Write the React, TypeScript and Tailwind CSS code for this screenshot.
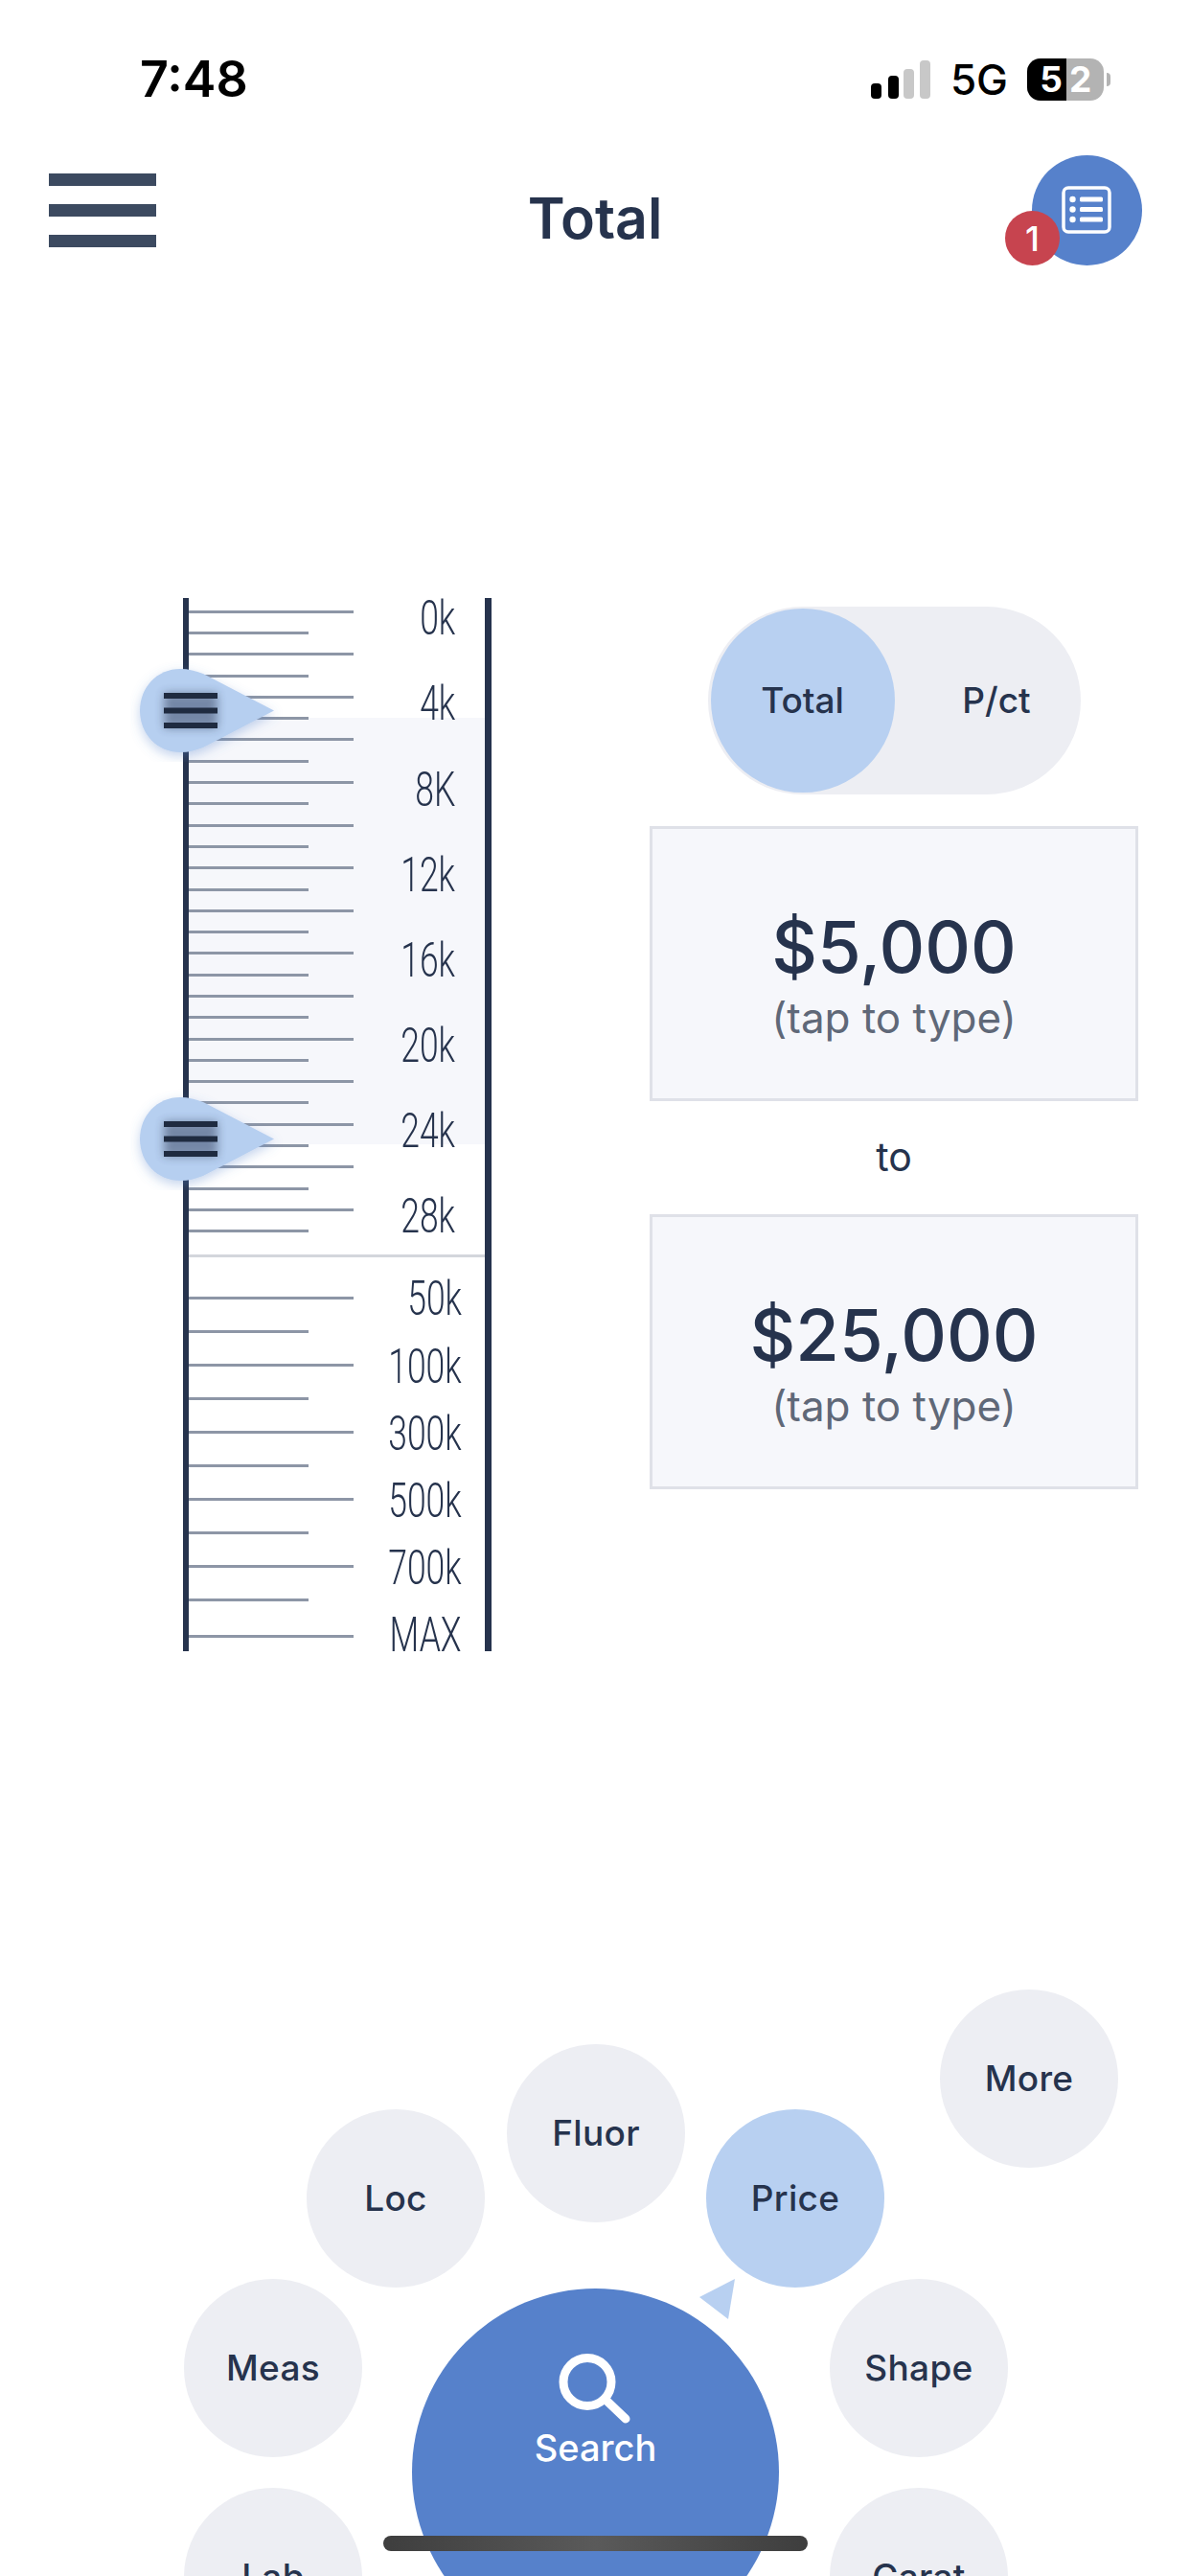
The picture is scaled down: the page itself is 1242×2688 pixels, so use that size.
import React from "react";

const SANS = "font-['Inter','Liberation_Sans',sans-serif]";

const upper = ["0k", "4k", "8K", "12k", "16k", "20k", "24k", "28k"];
const lower = ["50k", "", "100k", "", "300k", "", "500k", "", "700k", ""];

function Tick({ long }: { long: boolean }) {
  return <div className={`h-[3px] bg-[#8d96a6] ${long ? "w-[172px]" : "w-[125px]"}`} />;
}

function ScaleLabel({ text, className }: { text: string; className: string }) {
  return (
    <div className={`ml-auto flex h-0 items-center ${className}`}>
      <span className="origin-right scale-x-[0.71] font-['Roboto',sans-serif] text-[50px] font-light leading-none whitespace-nowrap text-[#26334d]">
        {text}
      </span>
    </div>
  );
}

function Handle({ top }: { top: string }) {
  return (
    <svg
      className={`absolute left-[-61px] h-[107px] w-[170px] ${top}`}
      viewBox="0 0 170 107"
      fill="none"
    >
      <defs>
        <filter id="hs" x="-30%" y="-30%" width="160%" height="170%">
          <feDropShadow dx="0" dy="4" stdDeviation="6" floodColor="#5681cb" floodOpacity="0.35" />
        </filter>
        <filter id="bs" x="-30%" y="-60%" width="160%" height="220%">
          <feGaussianBlur stdDeviation="5" />
        </filter>
      </defs>
      <path
        d="M52 10 C28 10 10 29 10 53.5 C10 78 28 97 52 97 C61 97 68 95 76 92 L150 53.5 L76 15 C68 12 61 10 52 10 Z"
        fill="#b6cff0"
        filter="url(#hs)"
      />
      <g fill="#26334d" opacity="0.45" filter="url(#bs)">
        <rect x="35" y="35" width="56" height="37" />
      </g>
      <g fill="#1f2b40">
        <rect x="35" y="35" width="56" height="6" />
        <rect x="35" y="50.5" width="56" height="6" />
        <rect x="35" y="66" width="56" height="6" />
      </g>
    </svg>
  );
}

function Ruler() {
  return (
    <div className="relative flex h-[1099px] w-[322px] flex-col border-x-[7px] border-l-[6px] border-[#26334d] pt-[3px]">
      <div className="absolute top-[125px] right-0 left-0 h-[445px] bg-[#f6f7fb]" />
      <div className="relative flex shrink-0 flex-col">
        {Array.from({ length: 30 }).map((_, i) => (
          <div key={i} className="flex h-[22.3px] shrink-0 items-center">
            <Tick long={i % 2 === 0} />
            {i % 4 === 0 && <ScaleLabel text={upper[i / 4]} className="mr-[31px] translate-y-[7px]" />}
          </div>
        ))}
      </div>
      <div className="relative mt-[13px] h-[3px] shrink-0 bg-[#d3d6dc]" />
      <div className="mt-[25px] flex shrink-0 flex-col">
        {lower.map((l, i) => (
          <div key={i} className="flex h-[35.05px] shrink-0 items-center">
            <Tick long={i % 2 === 0} />
            {l && <ScaleLabel text={l} className="mr-[24px] translate-y-[1px]" />}
          </div>
        ))}
        <div className="mt-[3px] flex h-[35px] shrink-0 items-center">
          <Tick long />
          <ScaleLabel text="MAX" className="mr-[24px] -translate-y-[2px]" />
        </div>
      </div>
      <Handle top="top-[64px]" />
      <Handle top="top-[511px]" />
    </div>
  );
}

function PriceBox({ value }: { value: string }) {
  return (
    <div className="flex h-[287px] w-[510px] flex-col items-center justify-center border-[3px] border-[#dfe1e8] bg-[#f6f7fb] pt-[18px]">
      <div className="text-[74px] leading-[90px] font-medium text-[#26334d]">{value}</div>
      <div className="mt-[4px] text-[44px] leading-[50px] text-[#5f6878]">(tap to type)</div>
    </div>
  );
}

function Bubble({ label, className, active }: { label: string; className: string; active?: boolean }) {
  return (
    <div
      className={`absolute flex h-[186px] w-[186px] items-center justify-center rounded-full text-[37px] font-medium tracking-[0.3px] text-[#26334d] ${
        active ? "bg-[#b8d0f1]" : "bg-[#edeef3]"
      } ${className}`}
    >
      {label}
    </div>
  );
}

export default function App() {
  return (
    <div className={`relative h-[2688px] w-[1242px] overflow-hidden bg-white ${SANS}`}>
      {/* status bar */}
      <div className="flex h-[162px] items-center justify-between pt-[3px] pr-[83px] pl-[146px]">
        <div className="text-[52px] leading-none font-semibold text-black">7:48</div>
        <div className="flex items-center">
          <svg width="62" height="40" viewBox="0 0 62 40" fill="none">
            <rect x="0" y="24" width="11" height="16" rx="4" fill="#000" />
            <rect x="18" y="16" width="11" height="24" rx="4" fill="#000" />
            <rect x="34" y="9" width="11" height="31" rx="4" fill="#c8c8c8" />
            <rect x="51" y="0" width="11" height="40" rx="4" fill="#c8c8c8" />
          </svg>
          <div className="ml-[21px] text-[44px] leading-none font-medium text-black">5G</div>
          <div className="ml-[20px] flex items-center">
            <div className="flex h-[44px] w-[80px] overflow-hidden rounded-[14px] bg-[#b3b3b3] text-[37px] leading-[44px] font-bold text-white">
              <div className="w-[41px] bg-black pr-[4px] text-right">5</div>
              <div className="pl-[3px]">2</div>
            </div>
            <div className="ml-[3px] h-[14px] w-[4px] rounded-r-full bg-[#b3b3b3]" />
          </div>
        </div>
      </div>

      {/* header */}
      <div className="relative flex h-[115px] items-center justify-between pr-[50px] pl-[51px]">
        <div className="flex flex-col gap-[19px]">
          <div className="h-[13px] w-[112px] bg-[#3c4a60]" />
          <div className="h-[13px] w-[112px] bg-[#3c4a60]" />
          <div className="h-[13px] w-[112px] bg-[#3c4a60]" />
        </div>
        <div className="mt-[18px] ml-[2px] text-[59px] font-semibold text-[#26334d]">Total</div>
        <div className="relative flex h-[115px] w-[115px] items-center justify-center rounded-full bg-[#5681cb]">
          <svg width="52" height="50" viewBox="0 0 52 50" fill="none" className="-mt-[2px]">
            <rect x="2" y="2" width="48" height="46" rx="5" stroke="#fff" strokeWidth="3.5" />
            <g fill="#fff">
              <circle cx="11.5" cy="14" r="3.2" />
              <circle cx="11.5" cy="24.5" r="3.2" />
              <circle cx="11.5" cy="35" r="3.2" />
              <rect x="19" y="11.5" width="24" height="5" rx="1.5" />
              <rect x="19" y="22" width="24" height="5" rx="1.5" />
              <rect x="19" y="32.5" width="24" height="5" rx="1.5" />
            </g>
          </svg>
          <div className="absolute top-[58px] left-[-28px] flex h-[57px] w-[57px] items-center justify-center rounded-full bg-[#c7444f] text-[36px] font-medium text-white">
            1
          </div>
        </div>
      </div>

      {/* body */}
      <div className="mt-[347px] flex items-start">
        <div className="ml-[191px]">
          <Ruler />
        </div>
        <div className="ml-[165px] flex w-[510px] flex-col items-center pt-[9px]">
          <div className="relative flex h-[196px] w-[389px] items-center rounded-full bg-[#edeef3] pl-[3px] text-[37px] font-medium text-[#26334d]">
            <div className="flex h-[192px] w-[192px] items-center justify-center rounded-full bg-[#b8d0f1]">Total</div>
            <div className="flex-1 pl-[19px] text-center">P/ct</div>
          </div>
          <div className="mt-[33px]">
            <PriceBox value="$5,000" />
          </div>
          <div className="flex h-[118px] items-center text-[41px] text-[#26334d]">to</div>
          <PriceBox value="$25,000" />
        </div>
      </div>

      {/* radial menu */}
      <Bubble label="More" className="top-[2076px] left-[981px]" />
      <Bubble label="Fluor" className="top-[2133px] left-[529px]" />
      <Bubble label="Loc" className="top-[2201px] left-[320px]" />
      <Bubble label="Price" className="top-[2201px] left-[737px]" active />
      <Bubble label="Meas" className="top-[2378px] left-[192px]" />
      <Bubble label="Shape" className="top-[2378px] left-[866px]" />
      <Bubble label="Lab" className="top-[2596px] left-[192px]" />
      <Bubble label="Carat" className="top-[2596px] left-[866px]" />
      <svg className="absolute top-[2370px] left-[720px]" width="60" height="60" viewBox="0 0 60 60">
        <polygon points="10,27 47,8 40,50" fill="#b8d0f1" />
      </svg>
      <div className="absolute top-[2388px] left-[430px] flex h-[383px] w-[383px] flex-col items-center rounded-full bg-[#5681cb] pt-[62px] text-white">
        <svg width="80" height="80" viewBox="0 0 80 80" fill="none" stroke="#fff" strokeLinecap="round">
          <circle cx="31" cy="35.5" r="25" strokeWidth="9" />
          <path d="M50 54 L71 74" strokeWidth="9" />
        </svg>
        <div className="mt-[2px] text-[38px] leading-[44px] font-medium">Search</div>
      </div>
      <div className="absolute top-[2646px] left-[400px] h-[16px] w-[443px] rounded-full bg-gradient-to-r from-[#3e3e3e] via-[#5a5a5a] to-[#3e3e3e]" />
    </div>
  );
}
